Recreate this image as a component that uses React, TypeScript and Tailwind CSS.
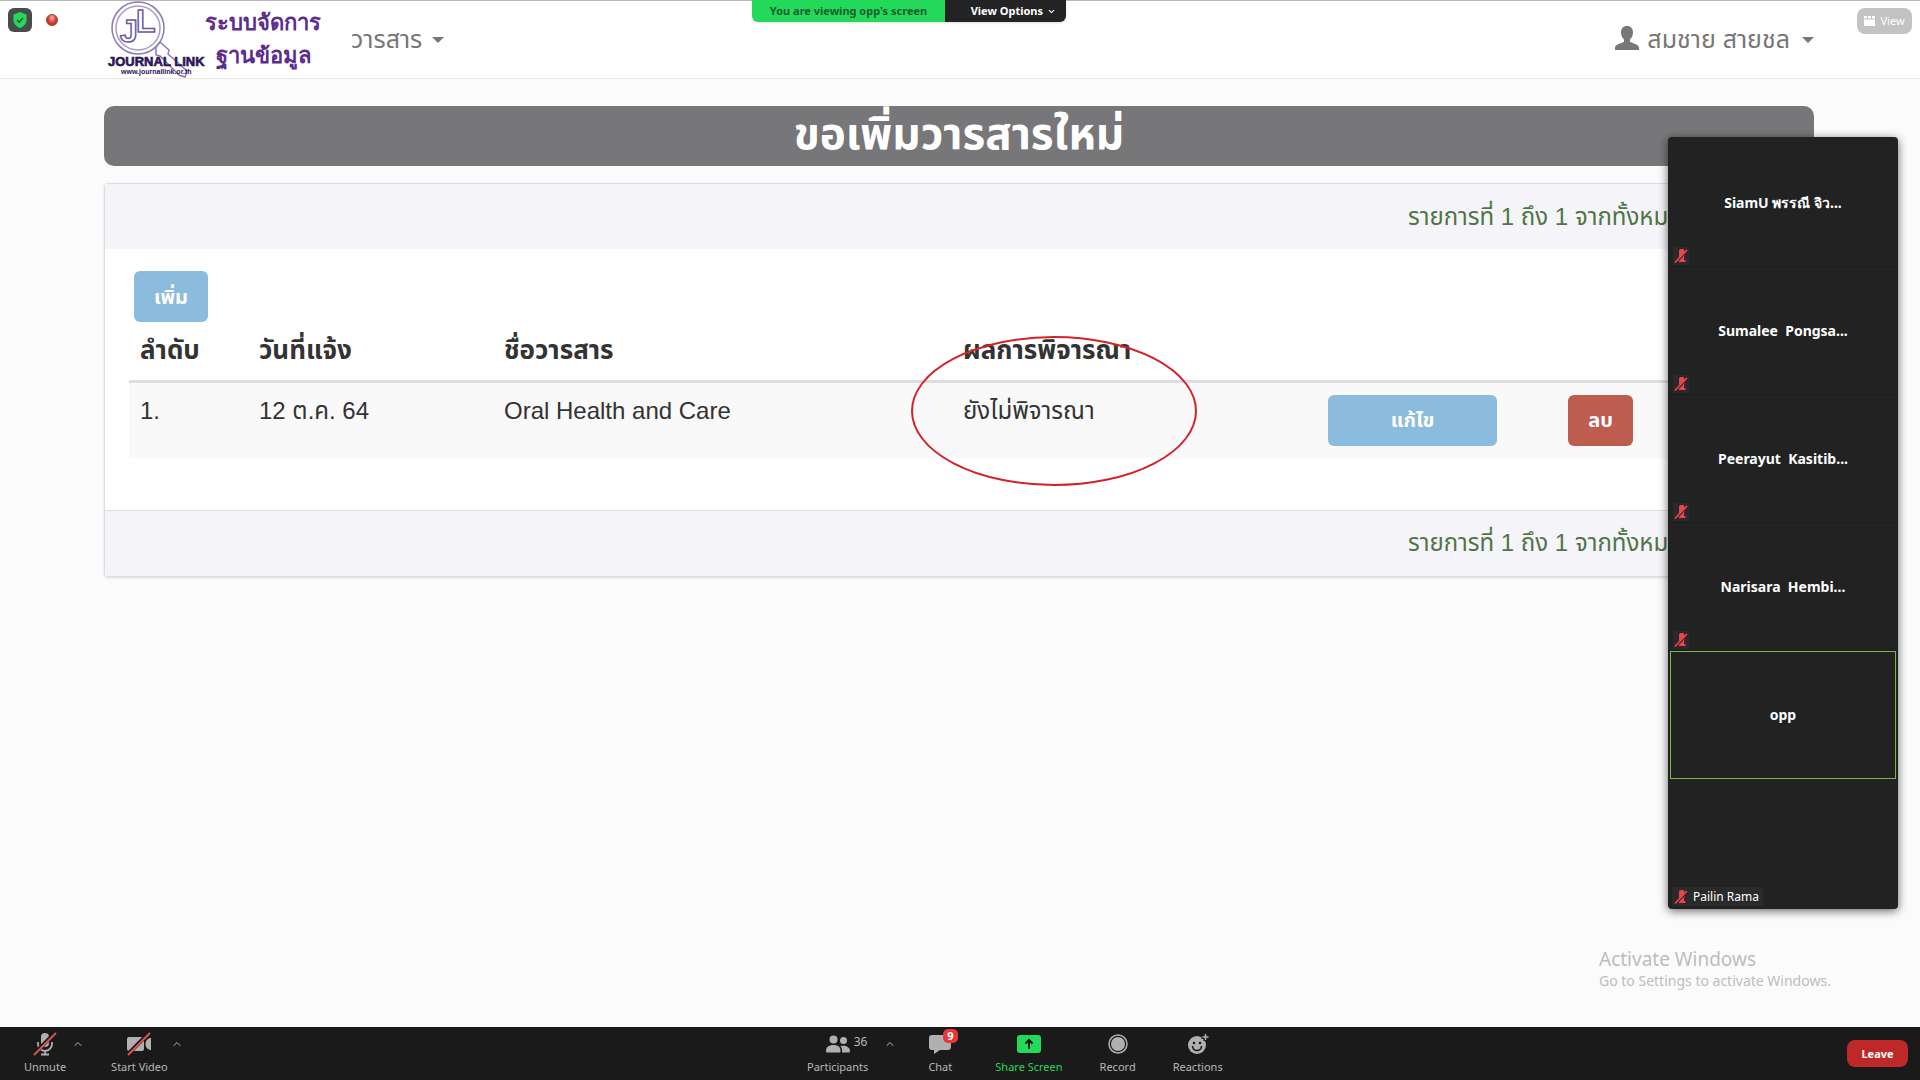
import React from "react";
import { ChevronDown, ChevronUp } from "lucide-react";

const participants = [
	{ name: "SiamU พรรณี จิว...", muted: true, active: false },
	{ name: "Sumalee  Pongsa...", muted: true, active: false },
	{ name: "Peerayut  Kasitib...", muted: true, active: false },
	{ name: "Narisara  Hembi...", muted: true, active: false },
	{ name: "opp", muted: false, active: true },
];

const journals = [
	{
		num: "1.",
		date: "12 ต.ค. 64",
		title: "Oral Health and Care",
		result: "ยังไม่พิจารณา",
	},
];

function Caret() {
	return (
		<span className="h-0 w-0 border-x-[6px] border-t-[6px] border-x-transparent border-t-[#777]" />
	);
}

function MutedIcon() {
	return (
		<svg viewBox="0 0 16 18" className="h-[18px] w-4 shrink-0">
			<rect x="6" y="2" width="5.500" height="9" rx="2" fill="#e8464b" />
			<path d="M7 10h4v3h1.500v2h-7v-2H7z" fill="#e8464b" />
			<path d="M3 15.500L15 3" stroke="#222" strokeWidth="2" />
			<path d="M2 15.500L14 3" stroke="#e8464b" strokeWidth="1.800" />
		</svg>
	);
}

function Logo() {
	return (
		<svg viewBox="0 0 220 78" className="h-[78px] w-[220px]">
			<g fill="none" stroke="#8a7ab5" strokeWidth="1.500">
				<circle cx="34" cy="27" r="26" />
				<circle cx="34" cy="27" r="22" stroke="#a99bcb" />
				<path d="M52 46l4-5 9 8-1 4 19 17-2 6-6-2-19-19-4-1z" />
			</g>
			<text x="16" y="41" fontFamily="Liberation Sans, sans-serif" fontSize="32" fontWeight="bold" fill="none" stroke="#6b5a9c" strokeWidth="1.500">J</text>
			<text x="32" y="31" fontFamily="Liberation Sans, sans-serif" fontSize="32" fontWeight="bold" fill="none" stroke="#6b5a9c" strokeWidth="1.500">L</text>
			<text x="4" y="65" fontFamily="Liberation Sans, sans-serif" fontSize="13" fontWeight="bold" fill="#2c1458" stroke="#2c1458" strokeWidth="0.600">JOURNAL LINK</text>
			<text x="17" y="73" fontFamily="Liberation Sans, sans-serif" fontSize="7" fontWeight="bold" fill="#2c1458">www.journallink.or.th</text>
			<text x="159" y="29" textAnchor="middle" fontFamily="Liberation Sans, sans-serif" fontSize="22" fontWeight="bold" fill="#5b2d90">ระบบจัดการ</text>
			<text x="159" y="62" textAnchor="middle" fontFamily="Liberation Sans, sans-serif" fontSize="22" fontWeight="bold" fill="#5b2d90">ฐานข้อมูล</text>
		</svg>
	);
}

function Navbar() {
	return (
		<nav className="flex h-[79px] items-center justify-between border-t border-b border-t-[#b8b8b8] border-b-[#e7e7e7] bg-white pr-[106px] pl-[104px] text-[25px] text-[#777]">
			<div className="flex items-center gap-[27px]">
				<a href="#home" aria-label="Journal Link">
					<Logo />
				</a>
				<button className="flex items-center gap-[10px]">
					วารสาร <Caret />
				</button>
			</div>
			<button className="flex items-center gap-3">
				<span className="flex items-center gap-2">
					<svg viewBox="0 0 24 24" className="mb-1 h-6 w-6" fill="#777">
						<path d="M12 0c3.800 0 6 2.700 6 6.300 0 3.200-1.300 5.600-3 7.200v2.200c2 1.600 9 2.500 9 6V24H0v-2.300c0-3.500 7-4.400 9-6v-2.200c-1.700-1.600-3-4-3-7.200C6 2.700 8.200 0 12 0z" />
					</svg>
					สมชาย สายชล
				</span>
				<Caret />
			</button>
		</nav>
	);
}

function Pager() {
	return (
		<p className="ml-auto w-[381px] whitespace-nowrap text-2xl text-[#4f7545]">
			รายการที่ 1 ถึง 1 จากทั้งหมด
		</p>
	);
}

function JournalTable() {
	return (
		<table className="w-full table-fixed text-left text-2xl text-[#333]">
			<thead>
				<tr className="h-[59px] border-b-[3px] border-[#ddd] text-[26px]">
					<th className="w-[119px] px-[11px]">ลำดับ</th>
					<th className="w-[245px] px-[11px]">วันที่แจ้ง</th>
					<th className="w-[459px] px-[11px]">ชื่อวารสาร</th>
					<th className="w-[365px] px-[11px]">
						<span className="relative">
							ผลการพิจารณา
							<svg
								viewBox="0 0 288 152"
								className="pointer-events-none absolute top-0 -left-[53px] h-[152px] w-[288px]"
							>
								<ellipse cx="144" cy="76" rx="142" ry="74" fill="none" stroke="#d2232a" strokeWidth="2" />
							</svg>
						</span>
					</th>
					<th className="w-[240px] px-[11px]" />
					<th className="px-[11px]" />
				</tr>
			</thead>
			<tbody>
				{journals.map((item) => (
					<tr key={item.num} className="bg-[#f9f9f9] align-top">
						<td className="px-[11px] py-3">{item.num}</td>
						<td className="px-[11px] py-3">{item.date}</td>
						<td className="px-[11px] py-3">{item.title}</td>
						<td className="px-[11px] py-3">{item.result}</td>
						<td className="px-[11px] py-3">
							<button className="block h-[51px] w-[169px] rounded-md bg-[#8bbcdd] text-xl font-bold text-white">
								แก้ไข
							</button>
						</td>
						<td className="px-[11px] py-3">
							<button className="block h-[51px] w-[65px] rounded-md bg-[#bc5d50] text-xl font-bold text-white">
								ลบ
							</button>
						</td>
					</tr>
				))}
			</tbody>
		</table>
	);
}

function ParticipantStrip() {
	return (
		<aside className="absolute top-[137px] right-[22px] flex w-[230px] flex-col rounded bg-[#222] p-[2px] font-['Noto_Sans','Open_Sans',sans-serif] text-white shadow-[0_2px_10px_rgba(0,0,0,0.6)]">
			{participants.map((item) => (
				<div
					key={item.name}
					className={
						item.active
							? "relative flex h-32 items-center justify-center border border-[#7fb83e]"
							: "relative flex h-32 items-center justify-center border-b border-[#1c1c1c]"
					}
				>
					<span className="whitespace-pre text-sm font-bold">{item.name}</span>
					{item.muted && (
						<span className="absolute bottom-px left-[3px] bg-[#2a2a2a]">
							<MutedIcon />
						</span>
					)}
				</div>
			))}
			<div className="flex h-32 items-end pb-px pl-[2px]">
				<span className="flex items-center gap-1 bg-[#2a2a2a] pr-1 pl-px text-xs leading-[19px]">
					<MutedIcon />
					Pailin Rama
				</span>
			</div>
		</aside>
	);
}

function ToolButton({
	label,
	green,
	children,
}: {
	label: string;
	green?: boolean;
	children: React.ReactNode;
}) {
	return (
		<button className="flex min-w-9 flex-col items-center gap-[3px]">
			<span className="relative flex h-6 items-center justify-center">{children}</span>
			<span className={green ? "text-[#23d959]" : "text-[#b8b8b8]"}>{label}</span>
		</button>
	);
}

function More({ label }: { label: string }) {
	return (
		<button aria-label={label} className="flex h-6 items-center text-[#b8b8b8]">
			<ChevronUp size={12} />
		</button>
	);
}

function Toolbar() {
	return (
		<footer className="flex h-[53px] items-start justify-between bg-[#1a1a1a] pt-[5px] pr-3 pl-6 font-['Noto_Sans','Open_Sans',sans-serif] text-[11px] leading-4">
			<div className="flex gap-[27px]">
				<div className="flex gap-[6px]">
					<ToolButton label="Unmute">
						<svg viewBox="0 0 24 24" className="h-6 w-6">
							<rect x="8" y="1" width="8" height="14" rx="4" fill="#b0b0b0" />
							<path d="M5 10v2a7 7 0 0 0 14 0v-2M12 19v3M8 22.500h8" fill="none" stroke="#b0b0b0" strokeWidth="1.800" />
							<path d="M0 23L23 0" stroke="#1a1a1a" strokeWidth="4" />
							<path d="M1 23L23 1" stroke="#e35450" strokeWidth="1.800" />
						</svg>
					</ToolButton>
					<More label="Audio options" />
				</div>
				<div className="flex gap-[3px]">
					<ToolButton label="Start Video">
						<svg viewBox="0 0 26 24" className="h-6 w-[26px]">
							<rect x="1" y="5" width="17" height="14" rx="2" fill="#b0b0b0" />
							<path d="M25 6v12c-3 0-5.500-2.500-5.500-6s2.500-6 5.500-6z" fill="#b0b0b0" />
							<path d="M1 23L24 0" stroke="#1a1a1a" strokeWidth="4" />
							<path d="M2 23L24 1" stroke="#e35450" strokeWidth="1.800" />
						</svg>
					</ToolButton>
					<More label="Video options" />
				</div>
			</div>

			<div className="flex">
				<ToolButton label="Participants">
					<svg viewBox="0 0 24 18" className="h-[18px] w-6" fill="#b0b0b0">
						<circle cx="7.500" cy="4.500" r="4" />
						<circle cx="17.500" cy="5.500" r="3.500" />
						<path d="M0 16c0-4 3-6 7.500-6s7 2 7 6c0 1-.5 1.500-1.500 1.500H1.500C.5 17.500 0 17 0 16z" />
						<path d="M16 17.500c.5-3-.5-5-1.500-6.500 5-1 9.500 1 9.500 5 0 1-.5 1.500-1.500 1.500z" />
					</svg>
					<span className="absolute -top-[2px] left-full pl-1 text-xs leading-6 text-[#b8b8b8]">36</span>
				</ToolButton>
				<div className="mr-[26px] ml-4">
					<More label="Participant options" />
				</div>
				<div className="flex gap-[37px]">
					<ToolButton label="Chat">
						<svg viewBox="0 0 22 20" className="h-5 w-[22px]" fill="#b0b0b0">
							<path d="M3 1h16a3 3 0 0 1 3 3v9a3 3 0 0 1-3 3h-8l-6 4v-4H3a3 3 0 0 1-3-3V4a3 3 0 0 1 3-3z" />
						</svg>
						<span className="absolute -top-[3px] left-[14px] rounded-[5px] bg-[#e8373b] px-1 text-[11px] leading-[14px] font-bold text-white">
							9
						</span>
					</ToolButton>
					<ToolButton label="Share Screen" green>
						<svg viewBox="0 0 24 18" className="h-[18px] w-6">
							<rect width="24" height="18" rx="3" fill="#23d959" />
							<path d="M12 14V5M8.500 8.500L12 5l3.500 3.500" fill="none" stroke="#1a1a1a" strokeWidth="2" />
						</svg>
					</ToolButton>
					<ToolButton label="Record">
						<svg viewBox="0 0 20 20" className="h-5 w-5">
							<circle cx="10" cy="10" r="9" fill="none" stroke="#b0b0b0" strokeWidth="1.500" />
							<circle cx="10" cy="10" r="7" fill="#b0b0b0" />
						</svg>
					</ToolButton>
					<ToolButton label="Reactions">
						<svg viewBox="0 0 24 22" className="h-[22px] w-6">
							<circle cx="11" cy="12" r="9" fill="#b0b0b0" />
							<circle cx="8" cy="10" r="1.300" fill="#1a1a1a" />
							<circle cx="14" cy="10" r="1.300" fill="#1a1a1a" />
							<path d="M6.500 13a4.500 4.500 0 0 0 9 0" fill="none" stroke="#1a1a1a" strokeWidth="1.600" />
							<path d="M19.500 0v8M15.500 4h8" stroke="#1a1a1a" strokeWidth="4" />
							<path d="M19.500 1v6M16.500 4h6" stroke="#b0b0b0" strokeWidth="1.500" />
						</svg>
					</ToolButton>
				</div>
			</div>

			<button className="mt-2 h-[27px] w-[61px] rounded-lg bg-[#be2828] font-bold text-white">
				Leave
			</button>
		</footer>
	);
}

export default function App() {
	return (
		<div className="relative flex min-h-screen flex-col bg-[#fbfbfb] font-['Liberation_Sans','Noto_Sans_Thai',sans-serif]">
			<Navbar />

			<main className="flex-1 pt-[27px] pr-[106px] pl-[104px]">
				<h1 className="h-[60px] rounded-[10px] bg-[#777679] text-center text-[44px] leading-[56px] font-bold text-white">
					ขอเพิ่มวารสารใหม่
				</h1>
				<section className="mt-[17px] rounded border border-[#ddd] bg-white shadow-sm">
					<div className="flex h-[65px] items-center bg-[#f5f5f9] pr-6">
						<Pager />
					</div>
					<div className="px-6 pt-[22px] pb-[52px]">
						<button className="ml-[5px] block h-[51px] w-[74px] rounded-md bg-[#8bbcdd] text-xl font-bold text-white">
							เพิ่ม
						</button>
						<JournalTable />
					</div>
					<div className="flex h-[66px] items-center border-t border-[#ddd] bg-[#f5f5f9] pr-6">
						<Pager />
					</div>
				</section>
			</main>

			<div className="mb-9 w-[321px] self-end font-['Noto_Sans','Open_Sans',sans-serif] text-[#bdbdbd]">
				<p className="text-[19px] leading-6">Activate Windows</p>
				<p className="text-sm leading-5">Go to Settings to activate Windows.</p>
			</div>

			<Toolbar />

			<div className="absolute top-2 left-2 flex items-center gap-[14px]">
				<span className="flex h-6 w-6 items-center justify-center rounded-md bg-[#4b4b4b]">
					<svg viewBox="0 0 14 16" className="h-4 w-[14px]">
						<path d="M7 0l6.500 2.500V8c0 4-3 6.500-6.500 8C3.500 14.500.5 12 .5 8V2.500z" fill="#23d959" />
						<path d="M4 8l2.200 2.200L10 6" fill="none" stroke="#2c4a35" strokeWidth="1.300" />
					</svg>
				</span>
				<span className="h-3 w-3 rounded-full border border-[#9c3a34] bg-radial-[at_50%_25%] from-[#f5b5aa] to-[#cf3527] to-60%" />
			</div>

			<div className="absolute top-0 left-[752px] flex h-[22px] overflow-hidden rounded-b-md font-['Noto_Sans','Open_Sans',sans-serif] text-[11px] leading-[22px] font-bold shadow">
				<span className="w-[193px] bg-[#23d959] text-center text-[#1d5c33]">
					You are viewing opp's screen
				</span>
				<button className="flex w-[121px] items-center justify-end gap-1 bg-[#232323] pr-[10px] text-white">
					View Options <ChevronDown size={9} strokeWidth={3} />
				</button>
			</div>

			<button className="absolute top-2 right-2 flex h-[26px] w-[55px] items-center justify-center gap-[5px] rounded-lg bg-[#c3c3c3] font-['Noto_Sans','Open_Sans',sans-serif] text-[11px] text-white">
				<svg viewBox="0 0 11 10" className="h-[10px] w-[11px]" fill="white">
					<path d="M0 0h3v2.500H0zM4 0h3v2.500H4zM8 0h3v2.500H8zM0 3.500h11V10H0z" />
				</svg>
				View
			</button>

			<ParticipantStrip />
		</div>
	);
}
